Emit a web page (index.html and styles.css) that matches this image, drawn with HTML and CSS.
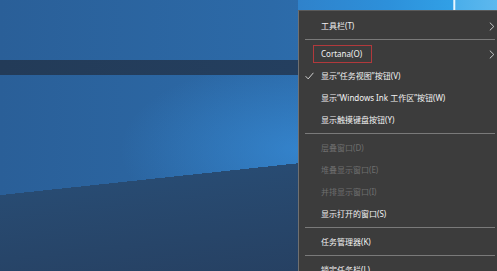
FILE: index.html
```html
<!DOCTYPE html>
<html lang="zh-CN">
<head>
<meta charset="utf-8">
<title>任务栏菜单</title>
<link rel="stylesheet" href="styles.css">
</head>
<body>
<div class="desktop">
  <div class="menu">
    <div class="item">
      <span class="mark"></span>
      <span class="label">工具栏(T)</span>
      <svg class="chev" width="6" height="9" viewBox="0 0 6 9"><polyline points="0.8,0.6 4.8,4.5 0.8,8.4" fill="none" stroke="#c8c8c8" stroke-width="1"/></svg>
    </div>
    <div class="sep"></div>
    <div class="item">
      <span class="mark"></span>
      <span class="label"><span class="boxed">Cortana(O)</span></span>
      <svg class="chev" width="6" height="9" viewBox="0 0 6 9"><polyline points="0.8,0.6 4.8,4.5 0.8,8.4" fill="none" stroke="#c8c8c8" stroke-width="1"/></svg>
    </div>
    <div class="item">
      <span class="mark"><svg width="9" height="8" viewBox="0 0 9 8"><polyline points="0.6,4.2 3.2,6.9 8.4,0.8" fill="none" stroke="#d0d0d0" stroke-width="1"/></svg></span>
      <span class="label">显示“任务视图”按钮(V)</span>
    </div>
    <div class="item">
      <span class="mark"></span>
      <span class="label">显示“Windows Ink 工作区”按钮(W)</span>
    </div>
    <div class="item">
      <span class="mark"></span>
      <span class="label">显示触摸键盘按钮(Y)</span>
    </div>
    <div class="sep"></div>
    <div class="item disabled">
      <span class="mark"></span>
      <span class="label">层叠窗口(D)</span>
    </div>
    <div class="item disabled">
      <span class="mark"></span>
      <span class="label">堆叠显示窗口(E)</span>
    </div>
    <div class="item disabled">
      <span class="mark"></span>
      <span class="label">并排显示窗口(I)</span>
    </div>
    <div class="item">
      <span class="mark"></span>
      <span class="label">显示打开的窗口(S)</span>
    </div>
    <div class="sep"></div>
    <div class="item">
      <span class="mark"></span>
      <span class="label">任务管理器(K)</span>
    </div>
    <div class="sep"></div>
    <div class="item">
      <span class="mark"></span>
      <span class="label">锁定任务栏(L)</span>
    </div>
  </div>
</div>
</body>
</html>
```
FILE: styles.css
```css
html, body {
  margin: 0;
  padding: 0;
}
body {
  width: 497px;
  height: 271px;
  overflow: hidden;
  font-family: "Noto Sans", "Noto Sans CJK SC", sans-serif;
}
.desktop {
  position: relative;
  width: 497px;
  height: 271px;
  overflow: hidden;
  background:
    linear-gradient(90deg, #2f82cb 0, #2d90da 45%, #31a0e6 78%, #e8f6ff 78.2%, #e8f6ff 79%, #4aaeea 79.2%, #5db8ee 100%) 298px 0 / 199px 10px no-repeat,
    linear-gradient(90deg, #233b58 0, #243f5f 60%, #26456a 100%) 0 60px / 100% 15px no-repeat,
    linear-gradient(173.9deg, transparent 194px, #284b72 194px, #263f60 100%),
    radial-gradient(ellipse 180px 90px at 300px 150px, rgba(58, 150, 230, 0.55), rgba(58, 150, 230, 0) 100%),
    linear-gradient(90deg, #2a5f98 0, #2c6aa8 55%, #2f78bd 100%);
}
.menu {
  position: absolute;
  left: 298px;
  top: 10px;
  right: -12px;
  bottom: -20px;
  background: #3c3c3c;
  border-left: 1px solid #707070;
  border-top: 1px solid #5a5a5a;
  padding-top: 4px;
  color: #f2f2f2;
  font-size: 8px;
}
.item {
  height: 22px;
  display: grid;
  grid-template-columns: 22px 1fr auto;
  align-items: center;
}
.mark {
  display: flex;
  align-items: center;
  padding-left: 6px;
}
.mark svg {
  display: block;
}
.label {
  white-space: nowrap;
  line-height: 10px;
}
.chev {
  display: block;
  margin-right: 14px;
}
.disabled .label {
  color: #6e6e6e;
}
.boxed {
  display: inline-block;
  border: 1px solid #b2393c;
  height: 16px;
  line-height: 16px;
  padding: 0 9px 0 7px;
  margin-left: -8px;
}
.sep {
  height: 1px;
  background: #7a7a7a;
  margin: 2px 14px 3px 6px;
}
```
